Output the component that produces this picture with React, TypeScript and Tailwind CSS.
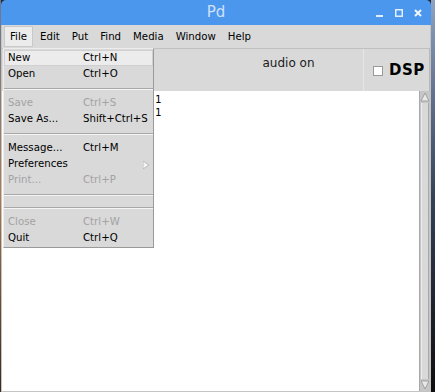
import React from "react";

const font = { fontFamily: '"DejaVu Sans", "Liberation Sans", sans-serif' };

type Item =
  | { kind: "item"; label: string; accel?: string; disabled?: boolean; active?: boolean; sub?: boolean }
  | { kind: "sep" };

const items: Item[] = [
  { kind: "item", label: "New", accel: "Ctrl+N", active: true },
  { kind: "item", label: "Open", accel: "Ctrl+O" },
  { kind: "sep" },
  { kind: "item", label: "Save", accel: "Ctrl+S", disabled: true },
  { kind: "item", label: "Save As...", accel: "Shift+Ctrl+S" },
  { kind: "sep" },
  { kind: "item", label: "Message...", accel: "Ctrl+M" },
  { kind: "item", label: "Preferences", sub: true },
  { kind: "item", label: "Print...", accel: "Ctrl+P", disabled: true },
  { kind: "sep" },
  { kind: "sep" },
  { kind: "item", label: "Close", accel: "Ctrl+W", disabled: true },
  { kind: "item", label: "Quit", accel: "Ctrl+Q" },
];

const menus = ["File", "Edit", "Put", "Find", "Media", "Window", "Help"];

export default function App() {
  return (
    <div className="w-[435px] h-[392px] flex overflow-hidden relative bg-[#202633]" style={font}>
      <div className="w-[1px] bg-gradient-to-b from-[#6b7890] via-[#b07a4a] to-[#3a2a20]" />
      <div className="w-[430px] flex flex-col">
        {/* title bar */}
        <div className="h-[25px] bg-[#4b97ee] rounded-t-[5px] flex items-center relative">
          <div className="flex-1 text-center text-[15px] text-[#cfe0f8] pb-[1px]">Pd</div>
          <div className="absolute right-[9px] top-[9px] flex items-center gap-[11px]">
            <svg width="8" height="8" viewBox="0 0 8 8">
              <rect x="0" y="6" width="7" height="2" fill="#e4eefc" />
            </svg>
            <svg width="8" height="8" viewBox="0 0 8 8">
              <rect x="0.75" y="0.75" width="6.5" height="6.5" fill="none" stroke="#e4eefc" strokeWidth="1.5" />
            </svg>
            <svg width="8" height="8" viewBox="0 0 8 8">
              <path d="M1 1 L7 7 M7 1 L1 7" stroke="#f2f6fe" strokeWidth="2" />
            </svg>
          </div>
        </div>
        {/* body */}
        <div className="flex-1 flex flex-col bg-[#d9d9d9] border-l border-r border-b border-[#c4c4c4]">
          {/* menubar */}
          <div className="h-[23px] flex items-center pl-[2px] text-[10.2px] text-black">
            {menus.map((m, i) => (
              <div
                key={m}
                className={
                  i === 0
                    ? "h-[21px] flex items-center px-[5px] bg-[#ececec] border border-[#c9c9c9] mr-[1px]"
                    : "h-[21px] flex items-center px-[6px]"
                }
              >
                {m}
              </div>
            ))}
          </div>
          {/* header */}
          <div className="h-[43px] flex border-t border-[#c0c0c0]">
            <div className="flex-1 flex justify-center pt-[5px] pl-[212px] text-[12px] text-[#1a1a1a]">audio on</div>
            <div className="w-[67px] flex items-center gap-[6px] pl-[9px] border-l border-[#e6e6e6] border-r border-r-[#b8b8b8]">
              <div className="w-[10px] h-[10px] bg-white border border-[#9a9a9a] mt-[1px]" />
              <div className="text-[15px] font-bold tracking-[0.5px] text-black">DSP</div>
            </div>
          </div>
          {/* text area */}
          <div className="flex-1 flex">
            <div className="flex-1 bg-white pl-[153px] pt-[2px] text-[10.5px] leading-[13px] text-black" style={{ fontFamily: '"DejaVu Sans Mono", monospace' }}>
              <div>1</div>
              <div>1</div>
            </div>
            <div className="w-[11px] flex flex-col bg-[#c6c6c6] border-l border-[#a8a8a8]">
              <svg width="10" height="10" viewBox="0 0 10 10" className="mt-[1px]">
                <polygon points="5,1 9,9 1,9" fill="#e8e8e8" stroke="#a0a0a0" strokeWidth="1" />
              </svg>
              <div className="flex-1 mx-[1px] my-[1px] bg-[#d9d9d9] border-l border-[#ececec] border-r border-r-[#a8a8a8]" />
              <svg width="10" height="10" viewBox="0 0 10 10" className="mb-[1px]">
                <polygon points="1,1 9,1 5,9" fill="#e8e8e8" stroke="#a0a0a0" strokeWidth="1" />
              </svg>
            </div>
          </div>
        </div>
      </div>
      <div className="flex-1 bg-gradient-to-b from-[#8ea3c2] via-[#35425a] to-[#0e0e10]" />

      {/* File dropdown */}
      <div className="absolute left-[3px] top-[48px] w-[151px] bg-[#d9d9d9] border border-[#ededed] border-r-[#9a9a9a] border-b-[#9a9a9a] py-[1px] text-[10.2px]">
        {items.map((it, i) =>
          it.kind === "sep" ? (
            <div key={i} className="h-[13px] flex items-center">
              <div className="w-full h-[2px] border-t border-[#a8a8a8] border-b border-b-[#f4f4f4]" />
            </div>
          ) : (
            <div
              key={i}
              className={
                "h-[16px] flex items-center pl-[3px] relative " +
                (it.active ? "bg-[#ececec] border border-[#d0d0d0]" : "border border-transparent") +
                (it.disabled ? " text-[#a3a3a3]" : " text-black")
              }
            >
              <div className="w-[75px]">{it.label}</div>
              <div>{it.accel}</div>
              {it.sub && (
                <svg width="6" height="8" viewBox="0 0 6 8" className="absolute right-[3px] top-[4px]">
                  <polygon points="0,0 6,4 0,8" fill="#f4f4f4" stroke="#b0b0b0" strokeWidth="0.8" />
                </svg>
              )}
            </div>
          )
        )}
      </div>
    </div>
  );
}
